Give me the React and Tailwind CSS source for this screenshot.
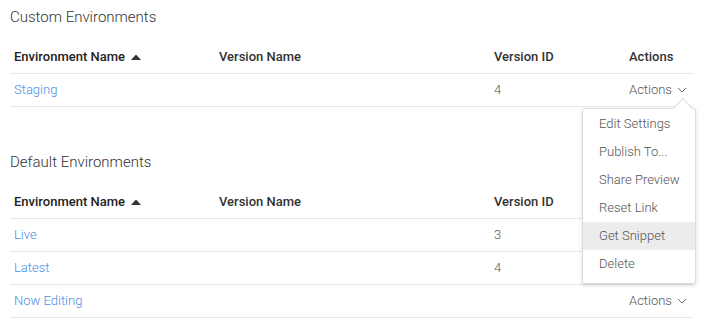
import React from "react";

const COLS = "grid grid-cols-[205px_275px_135px_68px]";

const Chevron = () => (
  <svg width="10" height="6" viewBox="0 0 10 6" className="ml-[5px] inline-block">
    <path d="M1 1l4 4 4-4" fill="none" stroke="#666" strokeWidth="1" />
  </svg>
);

const SortUp = () => (
  <svg width="10" height="6" viewBox="0 0 10 6" className="ml-[6px] inline-block">
    <path d="M0 6L5 0.5 10 6z" fill="#333" />
  </svg>
);

const MENU = ["Edit Settings", "Publish To...", "Share Preview", "Reset Link", "Get Snippet", "Delete"];

const ActionsMenu = () => (
  <div className="absolute left-[-43px] top-[34px] z-10 w-[114px] rounded-[2px] border border-[#dcdcdc] bg-white pt-[1px] pb-[5px] shadow-[0_2px_4px_rgba(0,0,0,0.12)]">
    <div className="absolute left-[93px] top-[-8px] h-[14px] w-[14px] rotate-45 border-l border-t border-[#dcdcdc] bg-white" />
    {MENU.map((item) => (
      <div
        key={item}
        className={`relative h-7 whitespace-nowrap px-[16px] leading-7 text-[13px] font-light text-[#555] ${item === "Get Snippet" ? "bg-[#ececec]" : ""}`}
      >
        {item}
      </div>
    ))}
  </div>
);

const EnvTable = ({ title, rows, className = "" }) => (
  <div className={className}>
    <h2 className="h-5 leading-5 text-[15px] font-light text-[#333]">{title}</h2>
    <div className={`${COLS} mt-[13px] h-[34px] items-center border-b border-[#e6e6e6] text-[13px] font-medium text-[#222]`}>
      <div className="flex items-center px-1">
        Environment Name
        <SortUp />
      </div>
      <div className="px-1 text-[#333]">Version Name</div>
      <div className="px-1 text-[#333]">Version ID</div>
      <div className="px-1 text-[#333]">Actions</div>
    </div>
    {rows.map((row) => (
      <div
        key={row.name}
        className={`${COLS} relative h-[33px] items-center border-b border-[#e6e6e6] text-[13px] font-light text-[#555]`}
      >
        <div className="px-1 text-[#4a8fe6]">{row.name}</div>
        <div className="px-1">{row.versionName}</div>
        <div className="px-1">{row.versionId}</div>
        <div className="relative self-stretch flex items-center px-1">
          {row.actions && (
            <span className="flex items-center whitespace-nowrap">
              Actions
              <Chevron />
            </span>
          )}
          {row.open && <ActionsMenu />}
        </div>
      </div>
    ))}
  </div>
);

export default function App() {
  return (
    <div
      className="min-h-[336px] w-[709px] bg-white px-[10px] pt-[7px]"
      style={{ fontFamily: "Roboto, 'Liberation Sans', sans-serif" }}
    >
      <div className="w-[683px]">
        <EnvTable
          title="Custom Environments"
          rows={[{ name: "Staging", versionName: "", versionId: "4", actions: true, open: true }]}
        />
        <EnvTable
          className="mt-[45px]"
          title="Default Environments"
          rows={[
            { name: "Live", versionName: "", versionId: "3", actions: false },
            { name: "Latest", versionName: "", versionId: "4", actions: false },
            { name: "Now Editing", versionName: "", versionId: "", actions: true },
          ]}
        />
      </div>
    </div>
  );
}
